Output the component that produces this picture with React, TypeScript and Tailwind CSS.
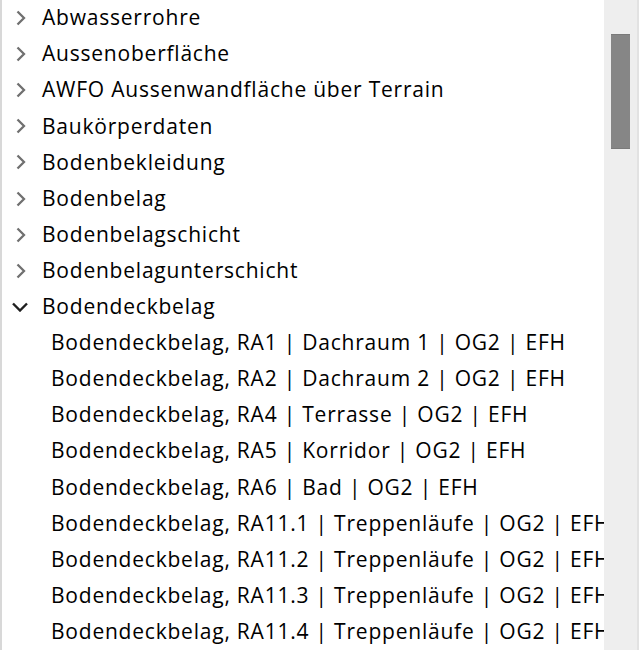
import React from "react";

const groups = [
  "Abwasserrohre",
  "Aussenoberfläche",
  "AWFO Aussenwandfläche über Terrain",
  "Baukörperdaten",
  "Bodenbekleidung",
  "Bodenbelag",
  "Bodenbelagschicht",
  "Bodenbelagunterschicht",
];

const children = [
  ["RA1", "Dachraum 1"],
  ["RA2", "Dachraum 2"],
  ["RA4", "Terrasse"],
  ["RA5", "Korridor"],
  ["RA6", "Bad"],
  ["RA11.1", "Treppenläufe"],
  ["RA11.2", "Treppenläufe"],
  ["RA11.3", "Treppenläufe"],
  ["RA11.4", "Treppenläufe"],
];

function Chevron({ open }: { open?: boolean }) {
  if (open) {
    return (
      <svg width="18" height="10" viewBox="0 0 18 10" className="ml-[9px] shrink-0">
        <path d="M2 1.5 L9 8.5 L16 1.5" fill="none" stroke="#1f1f1f" strokeWidth="2.4" />
      </svg>
    );
  }
  return (
    <svg width="10" height="16" viewBox="0 0 10 16" className="ml-[14px] shrink-0">
      <path d="M1.5 1.5 L8 8 L1.5 14.5" fill="none" stroke="#707070" strokeWidth="2.3" />
    </svg>
  );
}

function Row({ children, open }: { children: React.ReactNode; open?: boolean }) {
  return (
    <div className="flex h-[36.1px] items-center whitespace-nowrap">
      <div className="flex w-[40px] shrink-0 items-center">
        <Chevron open={open} />
      </div>
      {children}
    </div>
  );
}

export default function App() {
  return (
    <div
      className="flex h-[650px] w-[639px] overflow-hidden bg-white text-[21px] tracking-[0.78px] text-black"
      style={{ fontFamily: '"Open Sans", "Noto Sans", sans-serif' }}
    >
      <div className="w-[2px] shrink-0 bg-[#d8d8d8]" />
      <div className="min-w-0 flex-1 overflow-hidden">
        {groups.map((g) => (
          <Row key={g}>{g}</Row>
        ))}
        <Row open>Bodendeckbelag</Row>
        {children.map(([ra, room]) => (
          <div key={ra} className="flex h-[36.1px] items-center whitespace-nowrap pl-[49px]">
            Bodendeckbelag, {ra} | {room} | OG2 | EFH
          </div>
        ))}
      </div>
      <div className="flex w-[35px] shrink-0 bg-[#eeeeee]">
        <div className="flex flex-1 justify-center pt-[34px]">
          <div className="h-[115px] w-[19px] border-y border-[#7a7a7a] bg-[#868686]" />
        </div>
        <div className="w-[2px] bg-[#e2e2e2]" />
      </div>
    </div>
  );
}
